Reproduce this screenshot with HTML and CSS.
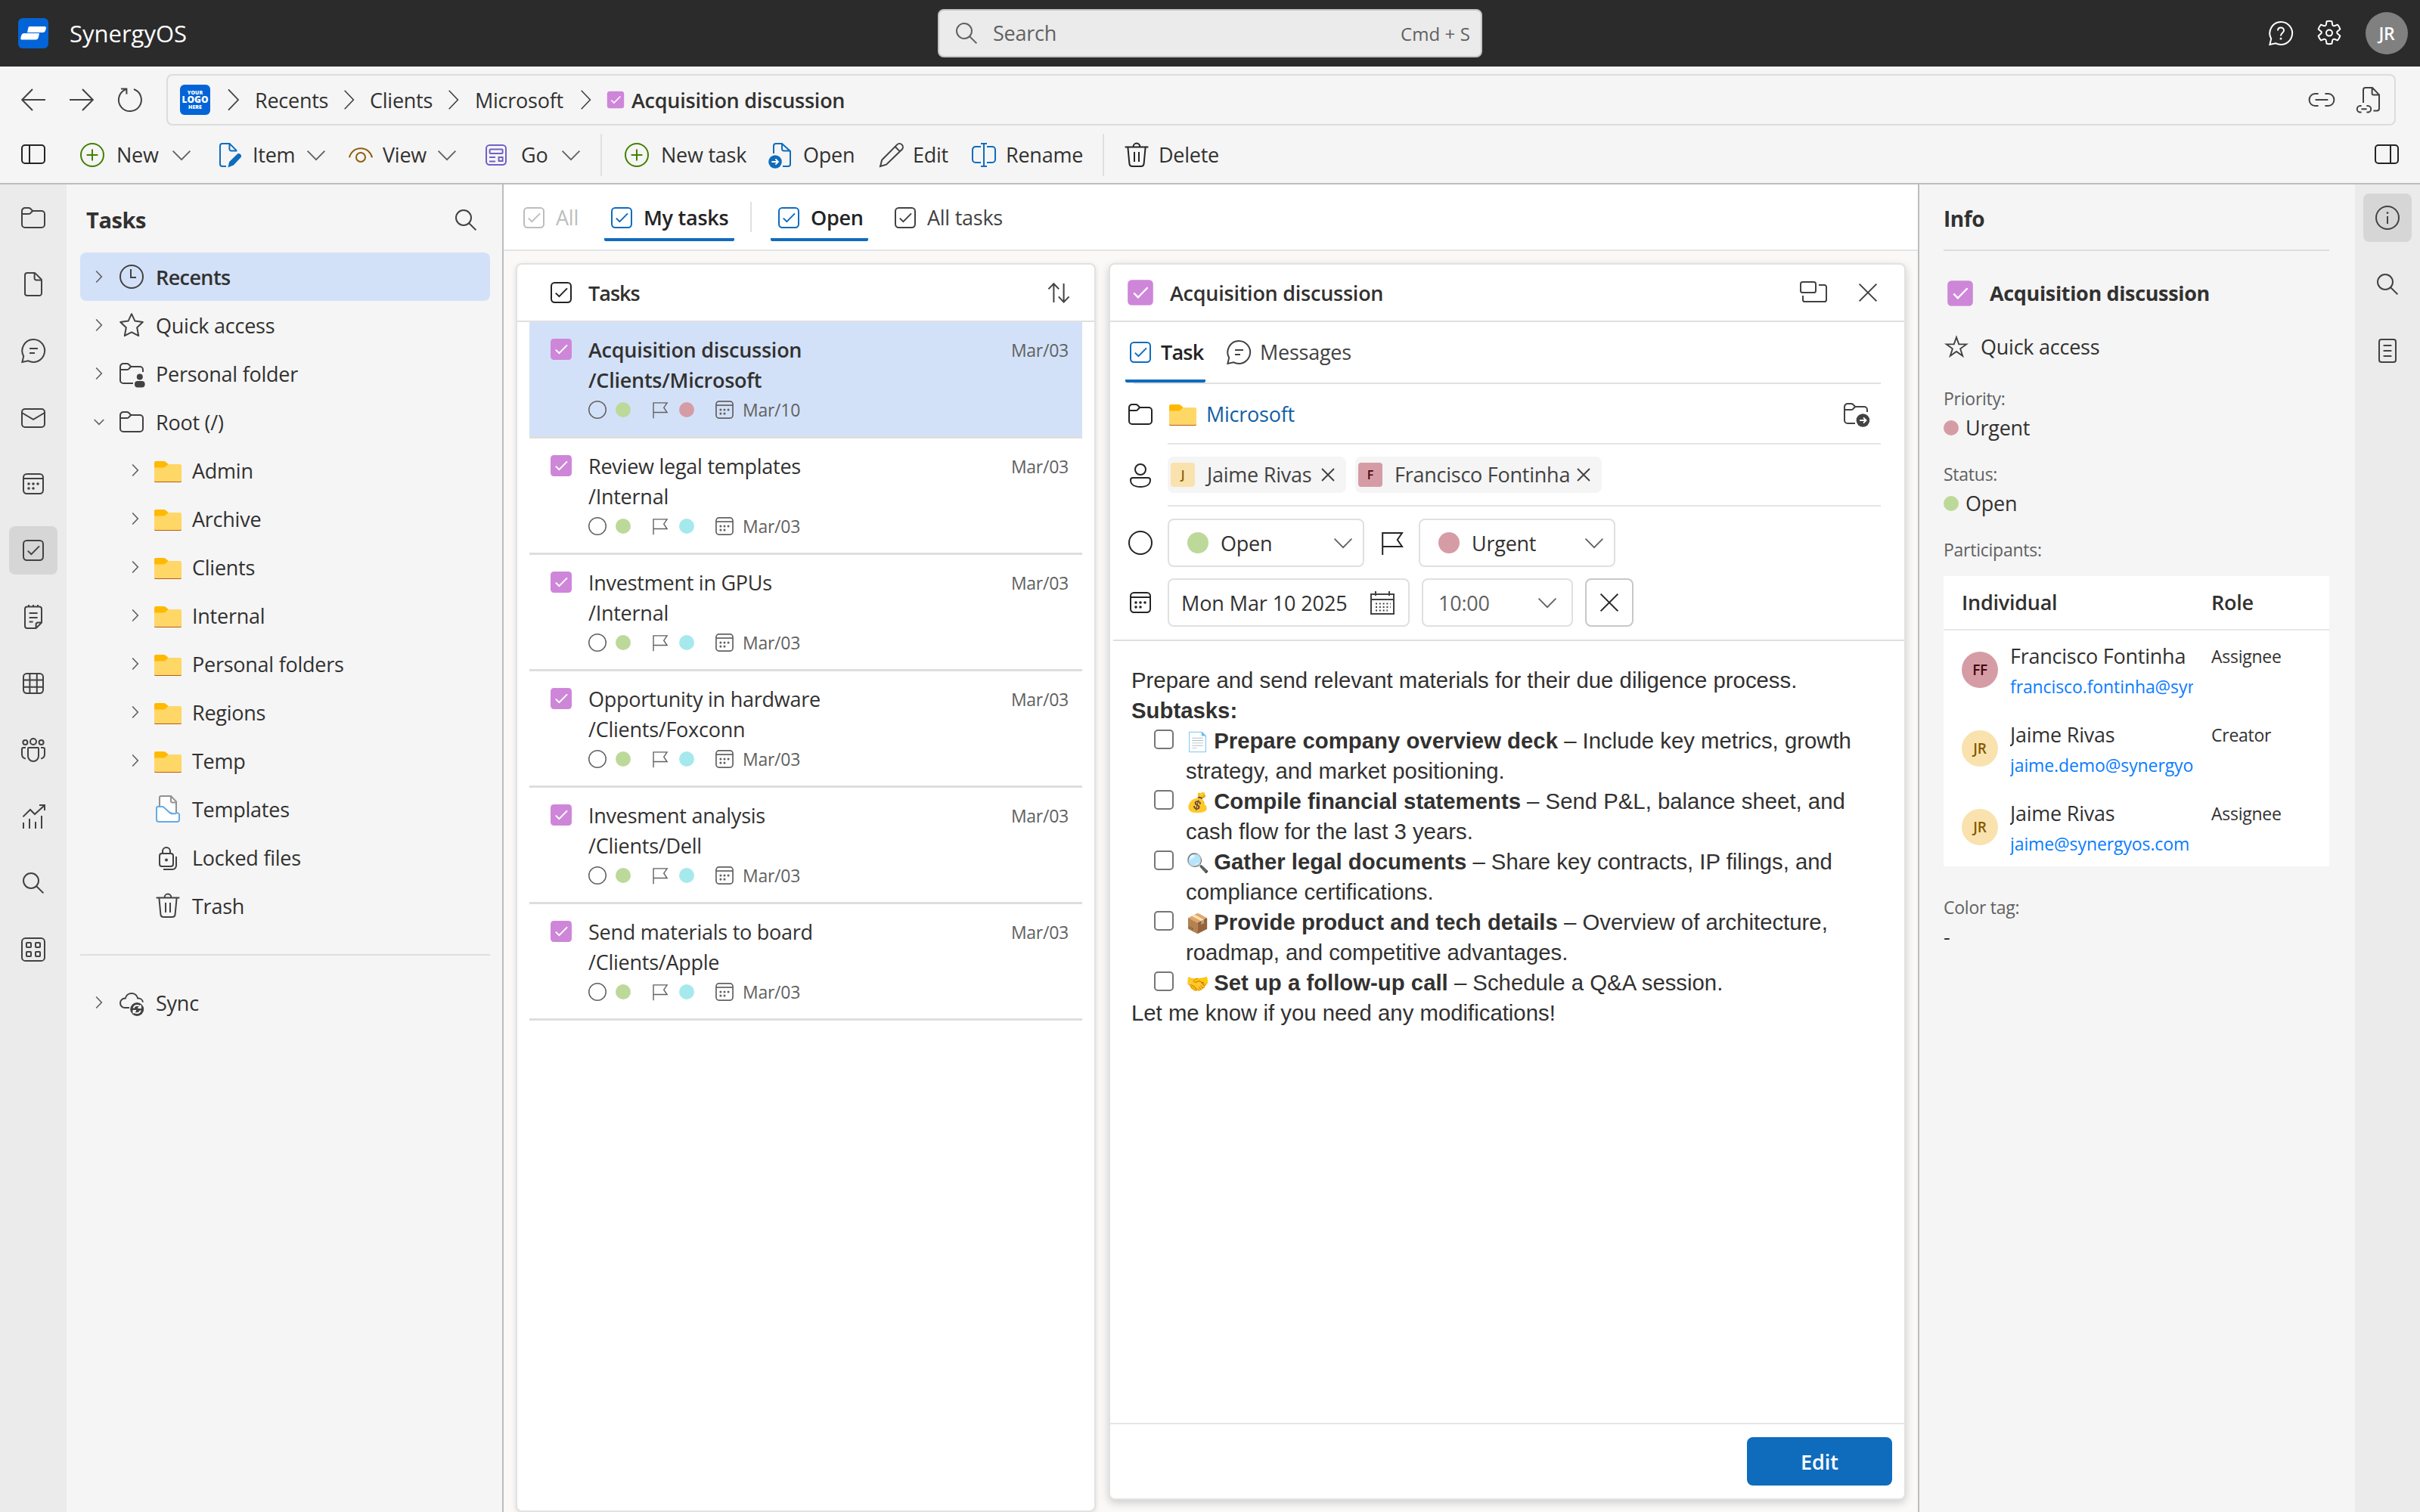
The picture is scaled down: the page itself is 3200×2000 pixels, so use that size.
FILE: index.html
```html
<!DOCTYPE html>
<html lang="en">
<head>
    <meta charset="UTF-8">
    <meta name="viewport" content="width=device-width, initial-scale=1.0">
    <title>SynergyOS - Tasks</title>
    <link rel="stylesheet" href="styles.css">
</head>
<body>
    <!-- Icon sprite, 20x20 grid -->
    <svg class="sprite" xmlns="http://www.w3.org/2000/svg">
        <symbol id="search" viewBox="0 0 20 20"><circle cx="8.5" cy="8.5" r="5"/><path d="M12.1 12.1 16.7 16.7"/></symbol>
        <symbol id="folder" viewBox="0 0 20 20"><path d="M2.5 5.5a2 2 0 0 1 2-2h2.4a1.5 1.5 0 0 1 1.1.4L9.6 5.5h5.9a2 2 0 0 1 2 2v7a2 2 0 0 1-2 2h-11a2 2 0 0 1-2-2z"/><path d="M2.5 7.5h4.4a1.5 1.5 0 0 0 1.1-.4L9.6 5.5"/></symbol>
        <symbol id="folder-person" viewBox="0 0 20 20"><path d="M11 16.5H4.5a2 2 0 0 1-2-2v-9a2 2 0 0 1 2-2h2.4a1.5 1.5 0 0 1 1.1.4L9.6 5.5h5.9a2 2 0 0 1 2 2V9"/><path d="M2.5 7.5h4.4a1.5 1.5 0 0 0 1.1-.4L9.6 5.5"/><circle class="solid" cx="15.4" cy="12.2" r="2"/><rect class="solid" x="12" y="15" width="6.8" height="4.2" rx="2"/></symbol>
        <symbol id="folder-move" viewBox="0 0 20 20"><path d="M9.5 16.5h-5a2 2 0 0 1-2-2v-9a2 2 0 0 1 2-2h2.4a1.5 1.5 0 0 1 1.1.4L9.6 5.5h5.9a2 2 0 0 1 2 2V9"/><path d="M2.5 7.5h4.4a1.5 1.5 0 0 0 1.1-.4L9.6 5.5"/><circle class="solid" cx="14.7" cy="14.5" r="4.4"/><path class="light" d="M12.6 14.5h4M15 12.7l1.8 1.8L15 16.3"/></symbol>
        <symbol id="folder-color" viewBox="0 0 20 20"><path d="M1 5a1 1 0 0 1 1-1h5.4a1.5 1.5 0 0 1 1 .4L10.4 6 8 9.5H1z" fill="#ffb900" stroke="none"/><path d="M1 8.2h6.4a1.5 1.5 0 0 0 1-.4l1.6-1.5a1.2 1.2 0 0 1 .8-.3H18a1 1 0 0 1 1 1v10a1 1 0 0 1-1 1H2a1 1 0 0 1-1-1z" fill="#ffd766" stroke="none"/><path d="M1 17.1a.8.8 0 0 0 .8.9h16.4a.8.8 0 0 0 .8-.9 1 1 0 0 1-.8.4H1.8a1 1 0 0 1-.8-.4z" fill="#bf5712" stroke="none"/></symbol>
        <symbol id="document" viewBox="0 0 20 20"><path d="M6 2.5h4.7a1 1 0 0 1 .7.3l3.8 3.8a1 1 0 0 1 .3.7V16a1.5 1.5 0 0 1-1.5 1.5H6A1.5 1.5 0 0 1 4.5 16V4A1.5 1.5 0 0 1 6 2.5z"/><path d="M10.8 2.5V6a1.2 1.2 0 0 0 1.2 1.2h3.5"/></symbol>
        <symbol id="chat" viewBox="0 0 20 20"><path d="M10 2.5a7.5 7.5 0 1 1-3.5 14.1l-3.8.9.9-3.9A7.5 7.5 0 0 1 10 2.5z"/><path d="M7.5 8.5h5.5M7.5 11.5h3.5"/></symbol>
        <symbol id="help" viewBox="0 0 20 20"><path d="M10 2.5a7.5 7.5 0 1 1-3.5 14.1l-3.8.9.9-3.9A7.5 7.5 0 0 1 10 2.5z"/><path d="M8 8.2c0-1.3.9-2 2-2s2 .8 2 1.9c0 1.6-2 1.8-2 3.6"/><circle class="solid" cx="10" cy="13.6" r=".7"/></symbol>
        <symbol id="gear" viewBox="0 0 20 20"><path stroke-linejoin="round" d="M8.3 2.1a8 8 0 0 1 3.4 0l.4 2.2a1 1 0 0 0 1.3.8l2.1-.8a8 8 0 0 1 1.7 3l-1.7 1.4a1 1 0 0 0 0 1.6l1.7 1.4a8 8 0 0 1-1.7 3l-2.1-.8a1 1 0 0 0-1.3.8l-.4 2.2a8 8 0 0 1-3.4 0l-.4-2.2a1 1 0 0 0-1.3-.8l-2.1.8a8 8 0 0 1-1.7-3l1.7-1.4a1 1 0 0 0 0-1.6L2.8 7.3a8 8 0 0 1 1.7-3l2.1.8a1 1 0 0 0 1.3-.8z"/><circle cx="10" cy="9.8" r="2"/></symbol>
        <symbol id="mail" viewBox="0 0 20 20"><rect x="2.5" y="4.500" width="15" height="12" rx="2"/><path d="M2.5 7 10 11.400l7.5-4.4"/></symbol>
        <symbol id="calendar" viewBox="0 0 20 20"><rect x="3.5" y="3.5" width="13" height="13" rx="2.2"/><path d="M3.5 6.5h13"/><g class="solid"><circle cx="7" cy="10" r=".9"/><circle cx="10" cy="10" r=".9"/><circle cx="13" cy="10" r=".9"/><circle cx="7" cy="13" r=".9"/><circle cx="10" cy="13" r=".9"/></g></symbol>
        <symbol id="calendar-grid" viewBox="0 0 20 20"><path d="M2.5 4.5h15v13h-15zM2.5 8h15M5.5 2.5v3M14.5 2.5v3"/><path stroke-dasharray="1 1.4" d="M5.5 10.7h10M5.5 13h10M5.5 15.3h8"/></symbol>
        <symbol id="check-box" viewBox="0 0 20 20"><rect x="3.5" y="3.5" width="13" height="13" rx="2.2"/><path d="M6.4 10.3 8.7 12.6 14 7.2"/></symbol>
        <symbol id="check-fill" viewBox="0 0 20 20"><rect x="3" y="3" width="14" height="14" rx="2.2" fill="#ce86d9" stroke="none"/><path d="M6.4 10.3 8.7 12.6 14 7.2" stroke="#fff"/></symbol>
        <symbol id="note" viewBox="0 0 20 20"><path d="M11.8 17.5H6A1.5 1.5 0 0 1 4.5 16V4.5A1.5 1.5 0 0 1 6 3.2h8a1.5 1.5 0 0 1 1.5 1.4v9.2zM11.8 17.5v-2.4a1.3 1.3 0 0 1 1.3-1.3h2.4M7 2v1.5M10 2v1.5M13 2v1.5M7.3 7.5h5.5M7.3 10.5h5.5M7.3 13.3h2.5"/></symbol>
        <symbol id="table" viewBox="0 0 20 20"><rect x="3.5" y="3.5" width="13" height="13" rx="2.2"/><path d="M3.5 7.7h13M3.5 12.4h13M7.7 3.5v13M12.4 3.5v13"/></symbol>
        <symbol id="people" viewBox="0 0 20 20"><circle cx="10" cy="4.5" r="2"/><circle cx="4.7" cy="5" r="1.5"/><circle cx="15.3" cy="5" r="1.5"/><path d="M6.5 9a.5.5 0 0 1 .5-.5h6a.5.5 0 0 1 .5.5v5a3.5 3.5 0 0 1-7 0zM5 8.5H3.5a1 1 0 0 0-1 1v3.3a3 3 0 0 0 2.4 3M15 8.5h1.5a1 1 0 0 1 1 1v3.3a3 3 0 0 1-2.4 3"/></symbol>
        <symbol id="chart" viewBox="0 0 20 20"><path d="M3.5 14v4M7.5 11.5V18M11.5 13.5V18M15.5 9.5V18M3.2 10.2 8 5.5l3 3L17.3 2.7M14 2.5h3.5V6"/></symbol>
        <symbol id="apps" viewBox="0 0 20 20"><rect x="2.5" y="2.5" width="15" height="15" rx="2.3"/><rect x="5.5" y="5.5" width="3" height="3" rx=".4"/><rect x="11.5" y="5.5" width="3" height="3" rx=".4"/><rect x="5.5" y="11.5" width="3" height="3" rx=".4"/><rect x="11.5" y="11.5" width="3" height="3" rx=".4"/></symbol>
        <symbol id="clock" viewBox="0 0 20 20"><circle cx="10" cy="10" r="7.5"/><path d="M9.5 5v5.5H13"/></symbol>
        <symbol id="star" viewBox="0 0 20 20"><path stroke-linejoin="round" d="m10 2.6 2.2 4.7 5.2.7-3.8 3.6 1 5.5L10 14.7l-4.6 2.4 1-5.5L2.6 8l5.2-.7z"/></symbol>
        <symbol id="star-sharp" viewBox="0 0 20 20"><path d="m10 3.2 1.7 4.9h5.2l-4.2 3.1 1.6 5L10 13.1l-4.3 3.1 1.6-5-4.2-3.1h5.2z"/></symbol>
        <symbol id="templates" viewBox="0 0 20 20"><path d="M4.5 10V2.5a1 1 0 0 1 1-1h6.5l3.5 3.7V14z" fill="#fff" stroke="#919191"/><path d="M12 1.5V5a.8.8 0 0 0 .8.7h2.7" stroke="#919191"/><path d="M3.5 8.5h2.6a2 2 0 0 1 1.3.5l4 3.6a2 2 0 0 0 1.3.5h2.3a1.500 1.500 0 0 1 2.500 1.500V17a1.500 1.500 0 0 1-1.500 1.500H4A1.500 1.500 0 0 1 2.500 17V9.500a1 1 0 0 1 1-1z" fill="#fff" stroke="#62abe8"/></symbol>
        <symbol id="lock" viewBox="0 0 20 20"><rect x="4.5" y="7.5" width="9" height="8.5" rx="1.5"/><path d="M6.5 7.5V6a2.5 2.5 0 0 1 5 0v1.5M15.5 9.5v6a2.5 2.5 0 0 1-2.5 2.5H7"/><circle class="solid" cx="9" cy="11.7" r="1"/></symbol>
        <symbol id="trash" viewBox="0 0 20 20"><path d="M2.3 4.8h15.4M7.8 4.5a2.2 2.2 0 0 1 4.4 0M4.2 5l1 10.7a2 2 0 0 0 2 1.8h5.6a2 2 0 0 0 2-1.8l1-10.7M8.5 8v6.5M11.5 8v6.5"/></symbol>
        <symbol id="sync" viewBox="0 0 20 20"><path d="M8.5 13.500H5.600a3.100 3.100 0 0 1 0-6.200h.3a4.200 4.200 0 0 1 8.200 0h.4a3 3 0 0 1 3 2.500"/><circle class="solid" cx="13.6" cy="14.5" r="4.5"/><path class="light" d="M11.300 13.800a2.500 2.500 0 0 1 4.400-.9l.4.600M16 11.700v1.800h-1.800M15.900 15.200a2.500 2.500 0 0 1-4.400.9l-.4-.6M11.200 17.300v-1.800H13"/></symbol>
        <symbol id="arrow-left" viewBox="0 0 20 20"><path d="M18 10H2.7M9.5 3 2.6 10l6.9 7"/></symbol>
        <symbol id="arrow-right" viewBox="0 0 20 20"><path d="M2 10h15.3M10.5 3l6.9 7-6.9 7"/></symbol>
        <symbol id="refresh" viewBox="0 0 20 20"><path d="M12.5 3a7.500 7.500 0 1 1-6 .4L7.300 3M4 2.700h3.700v3.600"/></symbol>
        <symbol id="chevron-right" viewBox="0 0 20 20"><path d="m6.5 3.2 6.5 6.8-6.500 6.800"/></symbol>
        <symbol id="chevron-down" viewBox="0 0 20 20"><path d="m4.3 7.300 5.700 5.800 5.700-5.800"/></symbol>
        <symbol id="link" viewBox="0 0 20 20"><path d="M7.8 6H5.500a3.700 4 0 0 0 0 8h2.300M12.200 6h2.300a3.700 4 0 0 1 0 8h-2.300M5.800 10h8.400"/></symbol>
        <symbol id="doc-link" viewBox="0 0 20 20"><path d="M5.5 12V3.500a1.500 1.500 0 0 1 1.500-1.500h4.500l4.500 4.700v9a1.500 1.500 0 0 1-1.500 1.500h-2.300M11.300 2.300v3.500a1 1 0 0 0 1 1h3.500M4.300 14H3.500a2 2 0 0 0 0 4.200h.8M7.700 14h.8a2 2 0 0 1 0 4.200h-.8M4.200 16.100h3.600"/></symbol>
        <symbol id="panel-left" viewBox="0 0 20 20"><rect x="2.5" y="3.500" width="15" height="12" rx="2"/><path d="M7.5 3.500v12"/></symbol>
        <symbol id="panel-right" viewBox="0 0 20 20"><rect x="2.5" y="3.500" width="15" height="12" rx="2"/><path d="M12.5 3.500v12"/></symbol>
        <symbol id="add" viewBox="0 0 20 20"><circle cx="10" cy="10" r="7.5"/><path d="M10 6.3v7.4M6.3 10h7.4"/></symbol>
        <symbol id="item" viewBox="0 0 20 20"><path d="M7.5 17.5H5A1.5 1.5 0 0 1 3.5 16V4A1.5 1.5 0 0 1 5 2.5h4.8l4.7 4.7M9.7 2.5V6a1.2 1.2 0 0 0 1.2 1.2h3.8"/><path class="solid" d="M14.600 9.600a1.600 1.600 0 0 1 2.400 2.300l-4.600 4.900-3.700 1.400.9-3.700z"/></symbol>
        <symbol id="view" viewBox="0 0 20 20"><path d="M2.5 11.7C3.2 8.2 6.2 5.6 10 5.6s6.8 2.6 7.500 6.100"/><circle cx="10" cy="11.5" r="3"/></symbol>
        <symbol id="go" viewBox="0 0 20 20"><rect x="3.5" y="3.5" width="13" height="13" rx="2.2"/><rect x="5.800" y="6.200" width="8.500" height="2.800" rx=".5"/><path d="M5.500 11.500h4M5.500 14.200h4"/><rect x="11.800" y="11.500" width="2.500" height="2.500"/></symbol>
        <symbol id="doc-open" viewBox="0 0 20 20"><path d="M5.5 9V4A1.5 1.5 0 0 1 7 2.5h4l5.500 5V16a1.500 1.500 0 0 1-1.500 1.500h-3.500M11 2.500V6a1.200 1.200 0 0 0 1.200 1.200h4"/><circle class="solid" cx="6.500" cy="14.500" r="4.400"/><path class="light" d="M4.200 14.500h4.300M6.700 12.700l1.800 1.800-1.800 1.800"/></symbol>
        <symbol id="edit" viewBox="0 0 20 20"><path d="M13.6 3.2a2.2 2.2 0 0 1 3.2 3.2L6.5 16.3l-4 1.200 1.100-4.200zM12.300 4.500l3.200 3.200"/></symbol>
        <symbol id="rename" viewBox="0 0 20 20"><path d="M8 15H4.500a2 2 0 0 1-2-2V6.500a2 2 0 0 1 2-2H8M12 4.500h3.500a2 2 0 0 1 2 2V13a2 2 0 0 1-2 2H12M10 2.500v15M8 2.500h4M8 17.500h4"/></symbol>
        <symbol id="sort" viewBox="0 0 20 20"><path d="M6.7 16.5v-12M3.2 7.7l3.500-3.600 3.400 3.600M13.300 4v12.300M9.900 12.700l3.400 3.600 3.500-3.600"/></symbol>
        <symbol id="flag" viewBox="0 0 20 20"><path d="M3.6 18V3.5h12.9L13.4 8l3.1 4.5H3.600"/></symbol>
        <symbol id="circle" viewBox="0 0 20 20"><circle cx="10" cy="10" r="7.5"/></symbol>
        <symbol id="person" viewBox="0 0 20 20"><circle cx="10" cy="6" r="3.5"/><path d="M5 11.5h10a1.5 1.5 0 0 1 1.5 1.5c0 2.9-2.6 4.5-6.5 4.5S3.5 15.9 3.5 13A1.5 1.5 0 0 1 5 11.5z"/></symbol>
        <symbol id="popout" viewBox="0 0 20 20"><rect x="1.5" y="3.5" width="10" height="7" rx="1.3"/><path d="M13.5 5.500h3.700a1.300 1.300 0 0 1 1.300 1.300v8.400a1.300 1.300 0 0 1-1.300 1.300H4.300a1.300 1.300 0 0 1-1.300-1.300V12.500"/></symbol>
        <symbol id="close" viewBox="0 0 20 20"><path d="m4.3 4.300 11.400 11.400M15.700 4.300 4.300 15.700"/></symbol>
        <symbol id="info" viewBox="0 0 20 20"><circle cx="10" cy="10" r="7.5"/><path d="M10 9v5"/><circle class="solid" cx="10" cy="6.8" r=".7"/></symbol>
        <symbol id="properties" viewBox="0 0 20 20"><rect x="4.5" y="2.5" width="11" height="15" rx="1.5"/><path d="M7.3 6.500h5.400M7.300 10h5.400M7.300 13.500h5.400"/></symbol>
    </svg>

    <header class="topbar">
        <div class="brand">
            <svg class="brand-logo" viewBox="0 0 40 40"><rect width="40" height="40" rx="6" fill="#0364d8"/><path d="M15 11h20a2 2 0 0 1 1.9 2.4l-.7 2.6a4 4 0 0 1-3.9 3H12l1.300-6a2 2 0 0 1 1.700-2zM7.700 20H28l-1.200 6a4 4 0 0 1-3.900 2.500H5A1.700 1.700 0 0 1 3.400 26.300l.7-3.300A4 4 0 0 1 7.700 20z" fill="#fff"/></svg>
            <span>SynergyOS</span>
        </div>
        <div class="search">
            <svg class="icon"><use href="#search"/></svg>
            <span class="search-label">Search</span>
            <span class="search-key">Cmd + S</span>
        </div>
        <div class="account">
            <svg class="icon"><use href="#help"/></svg>
            <svg class="icon gear"><use href="#gear"/></svg>
            <span class="avatar avatar-top">JR</span>
        </div>
    </header>

    <nav class="address">
        <svg class="icon"><use href="#arrow-left"/></svg>
        <svg class="icon"><use href="#arrow-right"/></svg>
        <svg class="icon"><use href="#refresh"/></svg>
        <div class="path">
            <div class="your-logo"><span>YOUR</span><b>LOGO</b><span>HERE</span></div>
            <svg class="icon crumb-sep first"><use href="#chevron-right"/></svg>
            <span class="crumb crumb-recents">Recents</span>
            <svg class="icon crumb-sep"><use href="#chevron-right"/></svg>
            <span class="crumb crumb-clients">Clients</span>
            <svg class="icon crumb-sep"><use href="#chevron-right"/></svg>
            <span class="crumb crumb-microsoft">Microsoft</span>
            <svg class="icon crumb-sep"><use href="#chevron-right"/></svg>
            <svg class="icon crumb-check"><use href="#check-fill"/></svg>
            <span class="crumb semibold">Acquisition discussion</span>
            <div class="path-actions">
                <svg class="icon"><use href="#link"/></svg>
                <svg class="icon"><use href="#doc-link"/></svg>
            </div>
        </div>
    </nav>

    <div class="toolbar">
        <svg class="icon dark"><use href="#panel-left"/></svg>
        <div class="tool tool-new"><svg class="icon green"><use href="#add"/></svg>New<svg class="icon chev"><use href="#chevron-down"/></svg></div>
        <div class="tool tool-item"><svg class="icon blue"><use href="#item"/></svg>Item<svg class="icon chev"><use href="#chevron-down"/></svg></div>
        <div class="tool tool-view"><svg class="icon brown"><use href="#view"/></svg>View<svg class="icon chev"><use href="#chevron-down"/></svg></div>
        <div class="tool tool-go"><svg class="icon purple"><use href="#go"/></svg>Go<svg class="icon chev"><use href="#chevron-down"/></svg></div>
        <div class="tool-sep"></div>
        <div class="tool tool-newtask"><svg class="icon green"><use href="#add"/></svg>New task</div>
        <div class="tool tool-open"><svg class="icon blue"><use href="#doc-open"/></svg>Open</div>
        <div class="tool tool-edit"><svg class="icon"><use href="#edit"/></svg>Edit</div>
        <div class="tool tool-rename"><svg class="icon blue"><use href="#rename"/></svg>Rename</div>
        <div class="tool-sep"></div>
        <div class="tool tool-delete"><svg class="icon dark"><use href="#trash"/></svg>Delete</div>
        <svg class="icon dark toggle-right"><use href="#panel-right"/></svg>
    </div>

    <div class="workspace">
        <!-- Module rail -->
        <aside class="rail">
            <div class="rail-item"><svg class="icon"><use href="#folder"/></svg></div>
            <div class="rail-item"><svg class="icon"><use href="#document"/></svg></div>
            <div class="rail-item"><svg class="icon"><use href="#chat"/></svg></div>
            <div class="rail-item"><svg class="icon"><use href="#mail"/></svg></div>
            <div class="rail-item"><svg class="icon"><use href="#calendar"/></svg></div>
            <div class="rail-item active"><svg class="icon"><use href="#check-box"/></svg></div>
            <div class="rail-item"><svg class="icon"><use href="#note"/></svg></div>
            <div class="rail-item"><svg class="icon"><use href="#table"/></svg></div>
            <div class="rail-item"><svg class="icon"><use href="#people"/></svg></div>
            <div class="rail-item"><svg class="icon"><use href="#chart"/></svg></div>
            <div class="rail-item"><svg class="icon"><use href="#search"/></svg></div>
            <div class="rail-item"><svg class="icon"><use href="#apps"/></svg></div>
        </aside>

        <!-- Tree -->
        <aside class="sidebar">
            <div class="sidebar-head"><h2>Tasks</h2><svg class="icon"><use href="#search"/></svg></div>
            <ul class="tree">
                <li class="selected"><svg class="icon twisty"><use href="#chevron-right"/></svg><svg class="icon"><use href="#clock"/></svg><span>Recents</span></li>
                <li><svg class="icon twisty"><use href="#chevron-right"/></svg><svg class="icon"><use href="#star"/></svg><span>Quick access</span></li>
                <li><svg class="icon twisty"><use href="#chevron-right"/></svg><svg class="icon"><use href="#folder-person"/></svg><span>Personal folder</span></li>
                <li><svg class="icon twisty"><use href="#chevron-down"/></svg><svg class="icon"><use href="#folder"/></svg><span>Root (/)</span></li>
                <li class="child"><svg class="icon twisty"><use href="#chevron-right"/></svg><svg class="icon"><use href="#folder-color"/></svg><span>Admin</span></li>
                <li class="child"><svg class="icon twisty"><use href="#chevron-right"/></svg><svg class="icon"><use href="#folder-color"/></svg><span>Archive</span></li>
                <li class="child"><svg class="icon twisty"><use href="#chevron-right"/></svg><svg class="icon"><use href="#folder-color"/></svg><span>Clients</span></li>
                <li class="child"><svg class="icon twisty"><use href="#chevron-right"/></svg><svg class="icon"><use href="#folder-color"/></svg><span>Internal</span></li>
                <li class="child"><svg class="icon twisty"><use href="#chevron-right"/></svg><svg class="icon"><use href="#folder-color"/></svg><span>Personal folders</span></li>
                <li class="child"><svg class="icon twisty"><use href="#chevron-right"/></svg><svg class="icon"><use href="#folder-color"/></svg><span>Regions</span></li>
                <li class="child"><svg class="icon twisty"><use href="#chevron-right"/></svg><svg class="icon"><use href="#folder-color"/></svg><span>Temp</span></li>
                <li class="child leaf"><svg class="icon"><use href="#templates"/></svg><span>Templates</span></li>
                <li class="child leaf"><svg class="icon"><use href="#lock"/></svg><span>Locked files</span></li>
                <li class="child leaf"><svg class="icon"><use href="#trash"/></svg><span>Trash</span></li>
            </ul>
            <hr>
            <ul class="tree">
                <li><svg class="icon twisty"><use href="#chevron-right"/></svg><svg class="icon"><use href="#sync"/></svg><span>Sync</span></li>
            </ul>
        </aside>

        <main class="main">
            <div class="filters">
                <div class="filter disabled"><svg class="icon"><use href="#check-box"/></svg>All</div>
                <div class="filter filter-my active"><svg class="icon"><use href="#check-box"/></svg>My tasks</div>
                <div class="filter-sep"></div>
                <div class="filter filter-open active"><svg class="icon"><use href="#check-box"/></svg>Open</div>
                <div class="filter filter-all"><svg class="icon"><use href="#check-box"/></svg>All tasks</div>
            </div>

            <div class="panes">
                <!-- Task list -->
                <section class="card list">
                    <div class="list-head"><svg class="icon dark"><use href="#check-box"/></svg><span class="semibold">Tasks</span><svg class="icon sort"><use href="#sort"/></svg></div>
                    <div class="task selected">
                        <svg class="icon"><use href="#check-fill"/></svg>
                        <div class="task-body">
                            <div class="task-title">Acquisition discussion<time>Mar/03</time></div>
                            <div>/Clients/Microsoft</div>
                            <div class="meta"><svg class="icon"><use href="#circle"/></svg><i class="dot open"></i><svg class="icon flag"><use href="#flag"/></svg><i class="dot urgent"></i><svg class="icon cal"><use href="#calendar"/></svg>Mar/10</div>
                        </div>
                    </div>
                    <div class="task">
                        <svg class="icon"><use href="#check-fill"/></svg>
                        <div class="task-body">
                            <div class="task-title">Review legal templates<time>Mar/03</time></div>
                            <div>/Internal</div>
                            <div class="meta"><svg class="icon"><use href="#circle"/></svg><i class="dot open"></i><svg class="icon flag"><use href="#flag"/></svg><i class="dot normal"></i><svg class="icon cal"><use href="#calendar"/></svg>Mar/03</div>
                        </div>
                    </div>
                    <div class="task">
                        <svg class="icon"><use href="#check-fill"/></svg>
                        <div class="task-body">
                            <div class="task-title">Investment in GPUs<time>Mar/03</time></div>
                            <div>/Internal</div>
                            <div class="meta"><svg class="icon"><use href="#circle"/></svg><i class="dot open"></i><svg class="icon flag"><use href="#flag"/></svg><i class="dot normal"></i><svg class="icon cal"><use href="#calendar"/></svg>Mar/03</div>
                        </div>
                    </div>
                    <div class="task">
                        <svg class="icon"><use href="#check-fill"/></svg>
                        <div class="task-body">
                            <div class="task-title">Opportunity in hardware<time>Mar/03</time></div>
                            <div>/Clients/Foxconn</div>
                            <div class="meta"><svg class="icon"><use href="#circle"/></svg><i class="dot open"></i><svg class="icon flag"><use href="#flag"/></svg><i class="dot normal"></i><svg class="icon cal"><use href="#calendar"/></svg>Mar/03</div>
                        </div>
                    </div>
                    <div class="task">
                        <svg class="icon"><use href="#check-fill"/></svg>
                        <div class="task-body">
                            <div class="task-title">Invesment analysis<time>Mar/03</time></div>
                            <div>/Clients/Dell</div>
                            <div class="meta"><svg class="icon"><use href="#circle"/></svg><i class="dot open"></i><svg class="icon flag"><use href="#flag"/></svg><i class="dot normal"></i><svg class="icon cal"><use href="#calendar"/></svg>Mar/03</div>
                        </div>
                    </div>
                    <div class="task">
                        <svg class="icon"><use href="#check-fill"/></svg>
                        <div class="task-body">
                            <div class="task-title">Send materials to board<time>Mar/03</time></div>
                            <div>/Clients/Apple</div>
                            <div class="meta"><svg class="icon"><use href="#circle"/></svg><i class="dot open"></i><svg class="icon flag"><use href="#flag"/></svg><i class="dot normal"></i><svg class="icon cal"><use href="#calendar"/></svg>Mar/03</div>
                        </div>
                    </div>
                </section>

                <!-- Task detail -->
                <section class="card detail">
                    <div class="detail-head">
                        <svg class="icon big-check"><use href="#check-fill"/></svg>
                        <span class="semibold">Acquisition discussion</span>
                        <svg class="icon popout"><use href="#popout"/></svg>
                        <svg class="icon"><use href="#close"/></svg>
                    </div>
                    <div class="tabs">
                        <div class="tab active"><svg class="icon"><use href="#check-box"/></svg>Task</div>
                        <div class="tab tab-messages"><svg class="icon"><use href="#chat"/></svg>Messages</div>
                    </div>
                    <div class="field">
                        <svg class="icon dark field-icon"><use href="#folder"/></svg>
                        <div class="field-value folder-value"><svg class="icon"><use href="#folder-color"/></svg><a>Microsoft</a><svg class="icon move"><use href="#folder-move"/></svg></div>
                    </div>
                    <div class="field">
                        <svg class="icon dark field-icon"><use href="#person"/></svg>
                        <div class="field-value people-value">
                            <div class="chip"><span class="chip-avatar yellow">J</span>Jaime Rivas<svg class="icon"><use href="#close"/></svg></div>
                            <div class="chip chip-wide"><span class="chip-avatar red">F</span>Francisco Fontinha<svg class="icon"><use href="#close"/></svg></div>
                        </div>
                    </div>
                    <div class="controls">
                        <svg class="icon dark field-icon"><use href="#circle"/></svg>
                        <div class="select"><i class="dot open"></i><span>Open</span><svg class="icon chev"><use href="#chevron-down"/></svg></div>
                        <svg class="icon dark flag-icon"><use href="#flag"/></svg>
                        <div class="select"><i class="dot urgent"></i><span>Urgent</span><svg class="icon chev"><use href="#chevron-down"/></svg></div>
                    </div>
                    <div class="controls controls-date">
                        <svg class="icon dark field-icon"><use href="#calendar"/></svg>
                        <div class="select date"><span>Mon Mar 10 2025</span><svg class="icon"><use href="#calendar-grid"/></svg></div>
                        <div class="select time"><span>10:00</span><svg class="icon chev"><use href="#chevron-down"/></svg></div>
                        <div class="clear"><svg class="icon dark"><use href="#close"/></svg></div>
                    </div>
                    <div class="note">
                        <p>Prepare and send relevant materials for their due diligence process.</p>
                        <p><b>Subtasks:</b></p>
                        <ul>
                            <li><span class="box"></span><span class="emoji">📄</span> <b>Prepare company overview deck</b> – Include key metrics, growth<br>strategy, and market positioning.</li>
                            <li><span class="box"></span><span class="emoji">💰</span> <b>Compile financial statements</b> – Send P&amp;L, balance sheet, and<br>cash flow for the last 3 years.</li>
                            <li><span class="box"></span><span class="emoji">🔍</span> <b>Gather legal documents</b> – Share key contracts, IP filings, and<br>compliance certifications.</li>
                            <li><span class="box"></span><span class="emoji">📦</span> <b>Provide product and tech details</b> – Overview of architecture,<br>roadmap, and competitive advantages.</li>
                            <li><span class="box"></span><span class="emoji">🤝</span> <b>Set up a follow-up call</b> – Schedule a Q&amp;A session.</li>
                        </ul>
                        <p>Let me know if you need any modifications!</p>
                    </div>
                    <div class="detail-foot"><button class="btn">Edit</button></div>
                </section>
            </div>
        </main>

        <!-- Info panel -->
        <aside class="info">
            <h2>Info</h2>
            <div class="info-title"><svg class="icon big-check"><use href="#check-fill"/></svg><b>Acquisition discussion</b></div>
            <div class="info-quick"><svg class="icon"><use href="#star-sharp"/></svg>Quick access</div>
            <div class="prop"><label>Priority:</label><div><i class="dot urgent"></i>Urgent</div></div>
            <div class="prop"><label>Status:</label><div><i class="dot open"></i>Open</div></div>
            <div class="prop prop-people"><label>Participants:</label></div>
            <div class="people">
                <div class="people-head"><span>Individual</span><span>Role</span></div>
                <div class="people-row"><span class="avatar red">FF</span><div class="who">Francisco Fontinha<a>francisco.fontinha@synergyos.com</a></div><span class="role">Assignee</span></div>
                <div class="people-row"><span class="avatar yellow">JR</span><div class="who">Jaime Rivas<a>jaime.demo@synergyos.com</a></div><span class="role">Creator</span></div>
                <div class="people-row"><span class="avatar yellow">JR</span><div class="who">Jaime Rivas<a>jaime@synergyos.com</a></div><span class="role">Assignee</span></div>
            </div>
            <div class="prop prop-color"><label>Color tag:</label><div>-</div></div>
        </aside>

        <aside class="rail rail-right">
            <div class="rail-item active"><svg class="icon"><use href="#info"/></svg></div>
            <div class="rail-item"><svg class="icon"><use href="#search"/></svg></div>
            <div class="rail-item"><svg class="icon"><use href="#properties"/></svg></div>
        </aside>
    </div>
</body>
</html>
```
FILE: styles.css
```css
* {
    box-sizing: border-box;
}

body {
    display: flex;
    flex-direction: column;
    height: 2000px;
    margin: 0;
    overflow: hidden;
    background: #f5f5f5;
    color: #323130;
    font-family: "Open Sans", "Noto Sans", sans-serif;
    font-size: 27px;
    letter-spacing: -0.25px;
    line-height: 40px;
    white-space: nowrap;
}

h2 {
    margin: 0;
    font-size: 28px;
    font-weight: 700;
    letter-spacing: -0.4px;
}

ul {
    list-style: none;
    margin: 0;
    padding: 0;
}

.sprite {
    position: absolute;
    width: 0;
    height: 0;
}

.icon {
    flex: none;
    display: block;
    width: 40px;
    height: 40px;
    color: #424242;
    fill: none;
    stroke: currentColor;
    stroke-width: 1;
}

.solid {
    fill: currentColor;
    stroke: none;
}

.light {
    stroke: #fff;
    stroke-width: 0.9;
}

.dark { color: #242424; }
.green { color: #428000; }
.blue { color: #0f6cbd; }
.brown { color: #8f5e0f; }
.purple { color: #7160c8; }

.chev {
    color: #616161;
    stroke-width: 0.9;
}

.semibold {
    font-weight: 600;
}

.dot {
    flex: none;
    width: 20px;
    height: 20px;
    border-radius: 50%;
}

.dot.open { background: #bcd99a; }
.dot.urgent { background: #d69ca5; }
.dot.normal { background: #a6e9ed; }

.yellow { background: #f9e2ae; color: #835b00; }
.red { background: #d69ca5; color: #420610; }

.avatar {
    display: flex;
    align-items: center;
    justify-content: center;
    width: 48px;
    height: 48px;
    border-radius: 50%;
    font-size: 19px;
    font-weight: 600;
}

/* Top bar */
.topbar {
    flex: none;
    display: flex;
    align-items: center;
    height: 88px;
    padding: 0 16px 0 24px;
    background: #2b2b2b;
    color: #fff;
}

.brand {
    display: flex;
    align-items: center;
    gap: 28px;
    width: 1216px;
    font-size: 31px;
    font-weight: 500;
    letter-spacing: 0;
}

.brand-logo {
    width: 40px;
    height: 40px;
}

.search {
    display: flex;
    align-items: center;
    width: 720px;
    height: 64px;
    padding: 0 14px 0 16px;
    background: #ebebeb;
    border: 2px solid #c4c4c4;
    border-radius: 8px;
    color: #616161;
}

.search .icon {
    color: #616161;
}

.search-label {
    margin-left: 15px;
}

.search-key {
    margin-left: auto;
    padding-top: 1px;
    font-size: 24px;
    letter-spacing: 0.1px;
}

.account {
    display: flex;
    align-items: center;
    margin-left: auto;
}

.account .icon {
    color: #fff;
}

.account .gear {
    margin: 0 28px 0 24px;
}

.avatar-top {
    width: 56px;
    height: 56px;
    background: #808080;
    font-size: 23px;
}

/* Address row */
.address {
    flex: none;
    display: flex;
    align-items: center;
    gap: 24px;
    height: 88px;
    padding: 0 32px 0 24px;
}

.path {
    flex: 1;
    display: flex;
    align-items: center;
    height: 68px;
    margin-left: 4px;
    padding: 0 12px 0 16px;
    border: 2px solid #dcdcdc;
    border-radius: 8px;
}

.your-logo {
    display: flex;
    flex-direction: column;
    align-items: center;
    justify-content: center;
    width: 40px;
    height: 40px;
    background: #0364d8;
    border-radius: 6px;
    color: #fff;
    font-size: 7px;
    font-weight: 800;
    letter-spacing: 0;
    line-height: 7px;
}

.your-logo b {
    font-size: 12px;
    line-height: 12px;
}

.crumb-sep {
    width: 36px;
    height: 36px;
    margin: 0 -5px 0 -2px;
    stroke-width: 0.9;
}

.crumb-sep.first {
    width: 40px;
    height: 40px;
    margin: 0 8px 0 11px;
}

.crumb {
    padding-top: 2px;
}

.crumb-recents { width: 109px; }
.crumb-clients { width: 95px; margin-left: 14px; }
.crumb-microsoft { width: 131px; margin-left: 15px; }

.crumb-check {
    width: 32px;
    height: 32px;
    margin-right: 5px;
    margin-left: 10px;
}

.path-actions {
    display: flex;
    gap: 24px;
    margin-left: auto;
}

/* Toolbar */
.toolbar {
    flex: none;
    display: flex;
    align-items: center;
    height: 68px;
    padding: 0 32px 8px 24px;
    border-bottom: 2px solid #bdbdbd;
}

.tool {
    display: flex;
    align-items: center;
    gap: 10px;
    height: 56px;
}

.tool .chev {
    width: 40px;
    margin-left: auto;
    margin-right: -7px;
    position: relative;
    left: -2px;
}

.tool-new { width: 148px; margin-left: 38px; gap: 12px; }
.tool-item { width: 146px; margin-left: 34px; }
.tool-view { width: 148px; margin-left: 27px; gap: 9px; }
.tool-go { width: 129px; margin-left: 31px; gap: 13px; }
.tool-newtask { width: 190px; margin-left: 26px; gap: 12px; }
.tool-open { width: 147px; gap: 10px; }
.tool-edit { width: 122px; gap: 8px; }
.tool-rename { width: 177px; gap: 9px; }
.tool-delete { margin-left: 23px; gap: 9px; }

.tool-sep {
    width: 2px;
    height: 56px;
    margin-left: 29px;
    background: #e0e0e0;
}

.tool-rename + .tool-sep {
    margin-left: 0;
}

.toggle-right {
    margin-left: auto;
    margin-right: -8px;
}

.workspace {
    flex: 1;
    display: flex;
    min-height: 0;
}

/* Rails */
.rail {
    flex: none;
    display: flex;
    flex-direction: column;
    align-items: center;
    gap: 24px;
    width: 88px;
    padding-top: 12px;
    background: #ebebeb;
}

.rail-right {
    width: 86px;
}

.rail-item {
    display: flex;
    align-items: center;
    justify-content: center;
    width: 64px;
    height: 64px;
    border-radius: 8px;
}

.rail-item.active {
    background: #d6d6d6;
}

/* Sidebar */
.sidebar {
    flex: none;
    width: 578px;
    padding: 0 16px 0 18px;
    border-right: 2px solid #bdbdbd;
}

.sidebar-head {
    display: flex;
    align-items: center;
    justify-content: space-between;
    height: 90px;
    padding: 4px 12px 0 8px;
}

.sidebar-head h2 {
    font-size: 29px;
}

.tree li {
    display: flex;
    align-items: center;
    height: 64px;
    padding-left: 11px;
    border-radius: 8px;
}

.tree .selected {
    background: #d3e1f8;
    font-weight: 600;
    letter-spacing: -0.6px;
}

.tree .twisty {
    width: 28px;
    height: 22px;
    margin-right: 9px;
    color: #616161;
    stroke-width: 1.5;
}

.tree span {
    margin-left: 12px;
    padding-top: 2px;
}

.tree .child {
    padding-left: 59px;
}

.tree .child .twisty {
    margin-right: 9px;
}

.tree .child span {
    margin-left: 12px;
}

.tree .leaf {
    padding-left: 96px;
}

.sidebar hr {
    height: 2px;
    margin: 32px 0 30px;
    border: 0;
    background: #dedede;
}

/* Filters */
.main {
    flex: none;
    display: flex;
    flex-direction: column;
    width: 1870px;
    background: #faf9f8;
}

.filters {
    flex: none;
    display: flex;
    height: 88px;
    padding: 7px 0 0 20px;
    background: #fff;
    border-bottom: 2px solid #e5e5e5;
}

.filter {
    display: flex;
    align-items: center;
    gap: 9px;
    height: 68px;
    padding: 5px 0 0;
    color: #424242;
}

.filter.active,
.tab.active {
    border-bottom: 4px solid #0f6cbd;
    border-radius: 2px;
    color: #242424;
    font-weight: 600;
}

.filter.active {
    padding-top: 9px;
}

.filter.active .icon,
.tab.active .icon {
    color: #0f6cbd;
}

.filter.disabled,
.filter.disabled .icon {
    color: #bdbdbd;
}

.filter-my { width: 172px; margin-left: 34px; padding-left: 3px; }
.filter-open { width: 129px; margin-left: 25px; padding-left: 4px; }
.filter-all { margin-left: 29px; }

.filter-sep {
    width: 2px;
    height: 40px;
    margin: 16px 0 0 21px;
    background: #e0e0e0;
}

/* Cards */
.panes {
    flex: 1;
    display: flex;
    gap: 17px;
    min-height: 0;
    padding: 16px 16px 0;
}

.card {
    background: #fff;
    border: 2px solid #e2e2e2;
    border-radius: 8px;
    box-shadow: 0 2px 6px rgba(0, 0, 0, 0.12);
}

.list {
    width: 767px;
}

.list-head {
    display: flex;
    align-items: center;
    gap: 16px;
    height: 76px;
    padding: 0 27px 0 38px;
    border-bottom: 2px solid #e0e0e0;
}

.list-head span {
    padding-top: 1px;
    letter-spacing: -1px;
}

.sort {
    margin-left: auto;
}

.task {
    display: flex;
    height: 154px;
    margin: 0 16px;
    padding: 16px 18px 0 22px;
    border-bottom: 3px solid #dedede;
}

.task > .icon {
    width: 40px;
    margin-right: 16px;
}

.task.selected {
    background: #d3e1f8;
    font-weight: 600;
}

.task-body {
    flex: 1;
    padding-top: 1px;
}

.task-title {
    display: flex;
    justify-content: space-between;
}

.task time,
.meta {
    color: #616161;
    font-size: 23px;
    font-weight: 400;
}

.meta {
    display: flex;
    align-items: center;
    height: 38px;
}

.meta .icon {
    width: 30px;
    height: 30px;
    margin-left: -3px;
    color: #616161;
}

.meta .icon + .dot {
    margin-left: 9px;
}

.meta .flag {
    width: 28px;
    height: 28px;
    margin: 0 0 0 25px;
}

.meta .flag + .dot {
    margin-left: 11px;
}

.meta .cal {
    width: 34px;
    height: 34px;
    margin: 0 7px 0 23px;
}

/* Detail */
.detail {
    flex: 1;
    display: flex;
    flex-direction: column;
    height: 1636px;
    box-shadow: 0 4px 12px rgba(0, 0, 0, 0.18);
}

.detail-head {
    flex: none;
    display: flex;
    align-items: center;
    height: 76px;
    padding: 0 28px 0 16px;
    border-bottom: 2px solid #e0e0e0;
}

.detail-head span {
    padding-top: 1px;
}

.big-check {
    width: 48px;
    height: 48px;
    margin-right: 15px;
}

.popout {
    margin: -2px 32px 0 auto;
}

.tabs {
    flex: none;
    display: flex;
    height: 82px;
    margin: 0 31px;
    border-bottom: 2px solid #e0e0e0;
}

.tab {
    display: flex;
    align-items: center;
    gap: 8px;
    height: 80px;
    padding: 0;
    color: #424242;
}

.tab.active {
    gap: 7px;
    width: 106px;
    margin-left: -11px;
    padding: 4px 0 0;
    letter-spacing: -0.8px;
}

.tab-messages {
    margin-left: 24px;
}

.field {
    flex: none;
    display: flex;
    align-items: center;
    height: 80px;
    padding: 0 31px 0 20px;
}

.field + .field {
    height: 82px;
}

.field-icon {
    margin-right: 16px;
}

.field-value {
    flex: 1;
    display: flex;
    align-items: center;
    height: 100%;
    border-bottom: 2px solid #e5e5e5;
}

.folder-value a {
    margin-left: 11px;
    padding-top: 1px;
    color: #115ea3;
}

.folder-value .move {
    margin: 0 13px 0 auto;
}

.people-value {
    gap: 12px;
}

.chip {
    display: flex;
    align-items: center;
    width: 236px;
    height: 48px;
    padding-left: 4px;
    background: #f5f5f5;
    border-radius: 8px;
    color: #424242;
}

.chip-wide {
    width: 326px;
}

.chip-avatar {
    width: 32px;
    height: 32px;
    margin-right: 16px;
    border-radius: 4px;
    font-size: 16px;
    font-weight: 600;
    line-height: 33px;
    text-align: center;
}

.chip .icon {
    width: 28px;
    margin: 0 10px 0 auto;
    stroke-width: 1.4;
}

.controls {
    flex: none;
    display: flex;
    align-items: center;
    height: 96px;
    padding-left: 20px;
}

.controls-date {
    height: 82px;
    margin-left: 4px;
    padding: 0 0 18px 16px;
    border-bottom: 2px solid #dedede;
}

.select {
    display: flex;
    align-items: center;
    width: 260px;
    height: 64px;
    padding: 0 10px 0 24px;
    border: 2px solid #e0e0e0;
    border-radius: 8px;
}

.select span {
    padding-top: 2px;
}

.select .dot {
    width: 28px;
    height: 28px;
    margin-right: 16px;
}

.select .icon {
    margin-left: auto;
    margin-right: -4px;
}

.flag-icon {
    margin: 0 15px 0 17px;
}

.date {
    width: 320px;
    padding: 0 18px 0 16px;
    letter-spacing: -0.1px;
}

.time {
    width: 200px;
    margin-left: 16px;
    padding-right: 16px;
    padding-left: 20px;
    color: #616161;
}

.clear {
    display: flex;
    align-items: center;
    justify-content: center;
    width: 64px;
    height: 64px;
    margin-left: 16px;
    border: 2px solid #c8c8c8;
    border-radius: 8px;
}

/* Task text */
.note {
    flex: 1;
    padding: 32px 27px 0 28px;
    font-family: "Liberation Sans", Arial, sans-serif;
    font-size: 29.33px;
    letter-spacing: 0;
}

.note p {
    margin: 0;
}

.note li {
    position: relative;
    height: 80px;
    padding-left: 72px;
}

.note li:last-child {
    height: 40px;
}

.note .box {
    position: absolute;
    left: 30px;
    top: 5px;
    width: 26px;
    height: 26px;
    border: 2px solid #767676;
    border-radius: 5px;
}

.emoji {
    display: inline-block;
    width: 29px;
    font-size: 25px;
    line-height: 30px;
    letter-spacing: -2px;
}

.detail-foot {
    flex: none;
    display: flex;
    align-items: center;
    justify-content: flex-end;
    height: 100px;
    padding-right: 16px;
    border-top: 2px solid #e5e5e5;
}

.btn {
    width: 192px;
    height: 64px;
    border: 0;
    border-radius: 8px;
    background: #0f6cbd;
    color: #fff;
    font: 600 27px "Open Sans", sans-serif;
}

/* Info panel */
.info {
    flex: none;
    width: 578px;
    padding: 0 34px 0 32px;
    border-left: 2px solid #bdbdbd;
}

.info h2 {
    height: 88px;
    padding-top: 4px;
    line-height: 83px;
    border-bottom: 2px solid #dcdcdc;
}

.info-title {
    display: flex;
    align-items: center;
    height: 72px;
    margin-top: 20px;
    margin-left: -2px;
    letter-spacing: -0.35px;
}

.info-quick {
    display: flex;
    align-items: center;
    gap: 13px;
    height: 56px;
    margin: 7px 0 15px -2px;
}

.info-quick .icon {
    width: 38px;
}

.prop {
    height: 100px;
    padding-top: 6px;
    line-height: 34px;
}

.prop label {
    display: block;
    color: #616161;
    font-size: 23px;
    line-height: 38px;
}

.prop div {
    display: flex;
    align-items: center;
    gap: 9px;
    height: 40px;
}

.prop-people {
    height: 60px;
}

.people {
    height: 384px;
    background: #fff;
}

.people-head {
    display: grid;
    grid-template-columns: 330px 1fr;
    align-items: center;
    height: 72px;
    padding-left: 24px;
    border-bottom: 2px solid #e8e8e8;
    font-weight: 600;
}

.people-row {
    display: flex;
    height: 104px;
    padding: 14px 0 0 24px;
}

.people-row .avatar {
    margin: 14px 16px 0 0;
}

.who {
    width: 242px;
    overflow: hidden;
}

.who a {
    display: block;
    color: #0a7cff;
    font-size: 23px;
    letter-spacing: -0.1px;
}

.role {
    margin-left: 24px;
    font-size: 23px;
}

.prop-color {
    margin-top: 29px;
}
```
